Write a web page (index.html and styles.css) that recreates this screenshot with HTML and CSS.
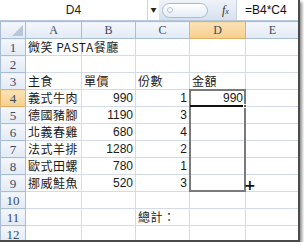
FILE: index.html
```html
<!DOCTYPE html>
<html lang="zh-Hant">
<head>
  <meta charset="UTF-8">
  <title>微笑 PASTA餐廳</title>
  <link rel="stylesheet" href="styles.css">
</head>
<body>
  <div class="window">
    <!-- formula bar -->
    <div class="formula-bar">
      <div class="name-box">D4</div>
      <div class="drop">&#9660;</div>
      <div class="bar-tools">
        <span class="grip"><span class="grip-dot"></span></span>
        <span class="fx">f<span class="fx-x">x</span></span>
      </div>
      <div class="formula">=B4*C4</div>
    </div>

    <!-- worksheet -->
    <div class="sheet">
      <table class="grid">
        <colgroup>
          <col class="c-head"><col class="c-a"><col class="c-b"><col class="c-c"><col class="c-d"><col class="c-e">
        </colgroup>
        <tr class="col-heads">
          <th class="corner"><span class="corner-mark"></span></th>
          <th>A</th><th>B</th><th>C</th><th class="active">D</th><th>E</th>
        </tr>
        <tr><th>1</th><td class="txt">微笑 PASTA餐廳</td><td></td><td></td><td></td><td></td></tr>
        <tr><th>2</th><td></td><td></td><td></td><td></td><td></td></tr>
        <tr><th>3</th><td class="txt">主食</td><td class="txt">單價</td><td class="txt">份數</td><td class="txt">金額</td><td></td></tr>
        <tr><th class="active">4</th><td class="txt">義式牛肉</td><td class="num">990</td><td class="num">1</td><td class="num">990</td><td></td></tr>
        <tr><th>5</th><td class="txt">德國豬腳</td><td class="num">1190</td><td class="num">3</td><td></td><td></td></tr>
        <tr><th>6</th><td class="txt">北義春雞</td><td class="num">680</td><td class="num">4</td><td></td><td></td></tr>
        <tr><th>7</th><td class="txt">法式羊排</td><td class="num">1280</td><td class="num">2</td><td></td><td></td></tr>
        <tr><th>8</th><td class="txt">歐式田螺</td><td class="num">780</td><td class="num">1</td><td></td><td></td></tr>
        <tr><th>9</th><td class="txt">挪威鮭魚</td><td class="num">520</td><td class="num">3</td><td></td><td></td></tr>
        <tr><th>10</th><td></td><td></td><td></td><td></td><td></td></tr>
        <tr><th>11</th><td></td><td></td><td class="txt">總計：</td><td></td><td></td></tr>
        <tr><th>12</th><td></td><td></td><td></td><td></td><td></td></tr>
      </table>

      <!-- fill range D4:D9 being dragged -->
      <div class="selection"></div>
      <div class="active-line"></div>
      <div class="fill-handle"></div>
      <div class="cursor">+</div>
    </div>
  </div>
</body>
</html>
```

FILE: styles.css
```css
* {
  box-sizing: border-box;
  margin: 0;
  padding: 0;
}

body {
  background-color: #ffffff;
  font-family: 'Noto Sans CJK TC', sans-serif;
}

.window {
  width: 300px;
  height: 242px;
  overflow: hidden;
  background-color: #ffffff;
  border-right: 2px solid #4a4a4a;
  border-bottom: 2px solid #4a4a4a;
  box-shadow: 2px 2px 3px rgba(0, 0, 0, 0.45);
}

/* formula bar */

.formula-bar {
  display: flex;
  height: 21px;
  background-color: #dfe8f4;
  border-bottom: 1px solid #b8c8dc;
}

.name-box {
  width: 148px;
  background-color: #ffffff;
  border-right: 1px solid #c8d4e3;
  color: #222222;
  font-family: 'Liberation Sans', sans-serif;
  font-size: 12px;
  line-height: 20px;
  text-align: center;
}

.drop {
  width: 11px;
  background-color: #ffffff;
  color: #222222;
  font-size: 6px;
  line-height: 20px;
  text-align: center;
}

.bar-tools {
  display: flex;
  align-items: center;
  width: 77px;
  padding-left: 3px;
  background: linear-gradient(#eef3fa, #d6e1ef);
}

.grip {
  display: flex;
  align-items: center;
  width: 46px;
  height: 15px;
  padding-left: 4px;
  border: 1px solid #a9bbd2;
  border-radius: 8px;
  background: linear-gradient(#ffffff, #e4ecf6);
}

.grip-dot {
  width: 6px;
  height: 6px;
  border: 1px solid #b6c3d4;
  border-radius: 50%;
}

.fx {
  margin-left: 14px;
  color: #333333;
  font-family: 'Liberation Serif', serif;
  font-size: 12px;
  font-style: italic;
}

.fx-x {
  font-size: 8px;
}

.formula {
  flex: 1;
  padding-left: 8px;
  background-color: #ffffff;
  border-left: 1px solid #c8d4e3;
  color: #111111;
  font-family: 'Liberation Sans', sans-serif;
  font-size: 12px;
  line-height: 20px;
}

/* worksheet */

.sheet {
  position: relative;
}

.grid {
  border-collapse: collapse;
  table-layout: fixed;
  width: 299px;
}

.c-head { width: 25px; }
.c-a { width: 56px; }
.c-b { width: 54px; }
.c-c { width: 54px; }
.c-d { width: 56px; }
.c-e { width: 54px; }

.grid th,
.grid td {
  height: 17px;
  padding: 0 2px;
  border: 1px solid #d4dae6;
  white-space: nowrap;
  overflow: visible;
  font-weight: normal;
}

.grid th {
  background: linear-gradient(#f4f7fc, #e2eaf5);
  border-color: #a9bdd5;
  color: #3c4a5c;
  font-family: 'Liberation Serif', serif;
  font-size: 13px;
  line-height: 15px;
  text-align: center;
}

.col-heads th {
  height: 17px;
  font-size: 12px;
}

.grid th.active {
  background: linear-gradient(#fbe2b6, #f6cf8c);
  border-color: #e0b064;
}

.corner {
  position: relative;
}

.corner-mark {
  position: absolute;
  right: 2px;
  bottom: 2px;
  width: 0;
  height: 0;
  border-left: 11px solid transparent;
  border-bottom: 11px solid #b7c6d9;
}

.txt {
  color: #1a1a1a;
  font-size: 12px;
  letter-spacing: 0.5px;
  line-height: 14px;
  text-align: left;
}

.num {
  color: #1a1a1a;
  font-family: 'Liberation Sans', sans-serif;
  font-size: 12px;
  line-height: 14px;
  text-align: right;
}

/* selection overlay */

.selection {
  position: absolute;
  left: 189px;
  top: 68px;
  width: 57px;
  height: 103px;
  border: 2px solid #7a7a7a;
}

.active-line {
  position: absolute;
  left: 190px;
  top: 84px;
  width: 54px;
  height: 2px;
  background-color: #111111;
}

.fill-handle {
  position: absolute;
  left: 243px;
  top: 83px;
  width: 4px;
  height: 4px;
  background-color: #555555;
  border: 1px solid #ffffff;
}

.cursor {
  position: absolute;
  left: 244px;
  top: 157px;
  color: #111111;
  font-family: 'DejaVu Sans', sans-serif;
  font-size: 14px;
  font-weight: bold;
  line-height: 14px;
}
```
